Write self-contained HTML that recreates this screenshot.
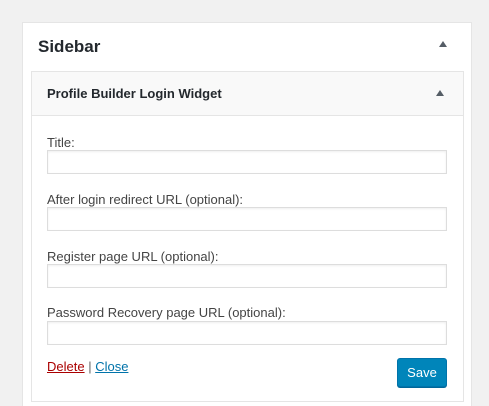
<!DOCTYPE html>
<html style="width:489px;height:406px;overflow:hidden"><head><meta charset="utf-8"><style>
*{margin:0;padding:0;box-sizing:border-box}
body{width:489px;height:406px;background:#f1f1f1;font-family:"Liberation Sans",sans-serif;position:relative;overflow:hidden;color:#444}
.a{position:absolute}
#outer{left:22px;top:22px;width:450px;height:384px;background:#fff;border:1px solid #e5e5e5;border-bottom:none}
#inner{left:31px;top:71px;width:433px;height:331px;background:#fff;border:1px solid #e5e5e5}
#head{left:32px;top:72px;width:431px;height:44px;background:#f9f9f9;border-bottom:1px solid #e5e5e5}
.tri{width:0;height:0;border-left:4px solid transparent;border-right:4px solid transparent;border-bottom:6px solid #555d66}
.lbl{left:47px;font-size:13px;color:#444}
.inp{left:47px;width:400px;height:24px;border:1px solid #ddd;background:#fff;box-shadow:inset 0 1px 2px rgba(0,0,0,.07)}
</style></head><body>
<div class="a" id="outer"></div>
<div class="a" style="left:38px;top:37px;font-size:17px;font-weight:bold;color:#23282d">Sidebar</div>
<div class="a tri" style="left:439px;top:41px"></div>
<div class="a" id="inner"></div>
<div class="a" id="head"></div>
<div class="a" style="left:47px;top:86px;font-size:13px;font-weight:bold;color:#23282d">Profile Builder Login Widget</div>
<div class="a tri" style="left:436px;top:90px"></div>
<div class="a lbl" style="top:135px">Title:</div>
<div class="a inp" style="top:150px"></div>
<div class="a lbl" style="top:192px">After login redirect URL (optional):</div>
<div class="a inp" style="top:207px"></div>
<div class="a lbl" style="top:249px">Register page URL (optional):</div>
<div class="a inp" style="top:264px"></div>
<div class="a lbl" style="top:305px">Password Recovery page URL (optional):</div>
<div class="a inp" style="top:321px"></div>
<div class="a" style="left:47px;top:359px;font-size:13px;color:#666"><span style="color:#a00;text-decoration:underline">Delete</span> | <span style="color:#0073aa;text-decoration:underline">Close</span></div>
<div class="a" style="left:397px;top:358px;width:50px;height:29px;background:#0085ba;border:1px solid #0073aa;border-radius:3px;box-shadow:0 1px 0 #006799;color:#fff;font-size:13px;text-align:center;line-height:27px">Save</div>
</body></html>
